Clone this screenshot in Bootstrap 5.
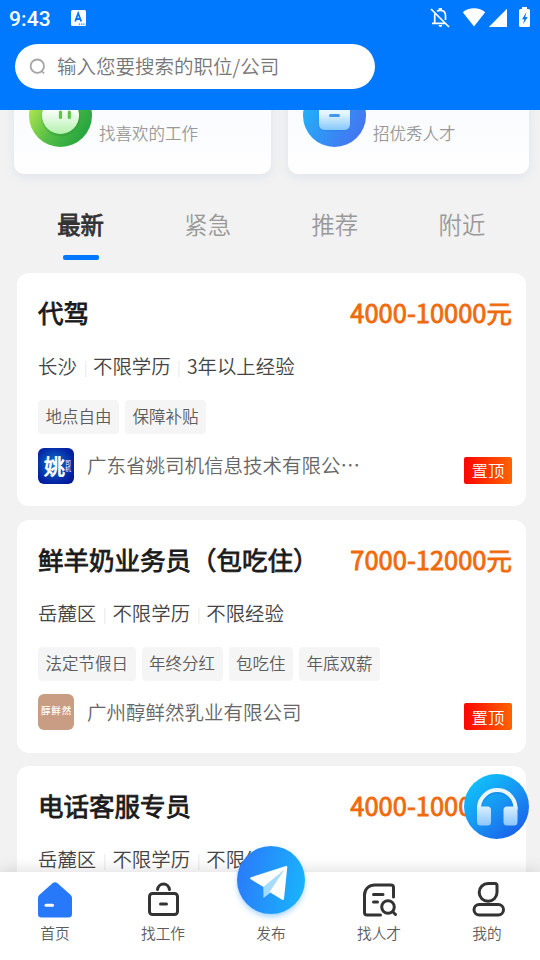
<!DOCTYPE html>
<html lang="zh-CN">
<head>
    <meta charset="UTF-8">
    <meta name="viewport" content="width=device-width, initial-scale=1">
    <title>招聘首页</title>
    <link href="https://cdn.jsdelivr.net/npm/bootstrap@5.3.0/dist/css/bootstrap.min.css" rel="stylesheet">
    <style>
        body { font-family: "Noto Sans CJK SC", sans-serif; font-weight: 350; background: #f2f2f2; height: 960px; line-height: 1; }
        svg { display: block; flex: none; }
        .heavy { font-weight: 400; -webkit-text-stroke: .8px currentColor; }

        .app-header { background: #0079ff; height: 110px; z-index: 2; }
        .status-bar { height: 36px; padding: 0 9px; }
        .clock { font-family: Roboto, sans-serif; font-size: 21px; font-weight: 500; letter-spacing: .1px; margin-right: 20px; padding-top: 2px; }
        .search-box { width: 360px; height: 45px; margin: 8px 0 0 15px; padding-left: 14px; color: #777; font-size: 19.5px; }
        .search-box span { padding-bottom: 1px; }

        .entry-row { margin: -53px 11px 0 14px; gap: 17px; }
        .entry { height: 117px; border-radius: 10px; padding-left: 15px; gap: 7px; color: #999; font-size: 16.5px;
                 background: linear-gradient(#f5f9ff, #fefefe); box-shadow: 0 3px 12px rgba(90, 130, 200, .12); }
        .entry span { padding-top: 36px; }
        .entry-job { width: 257px; }
        .entry-hire { width: 241px; }

        .tabs { height: 99px; padding: 39px 14.5px 0 17px; font-size: 23.4px; color: #999; }
        .tab-on { color: #333; }
        .tab-on::after { content: ""; display: block; width: 36px; height: 5px; margin: 19px auto 0; border-radius: 2px; background: #0079ff; }

        .jobs { margin: 0 14px 0 17px; gap: 13.7px; }
        .job { flex: none; height: 233px; border-radius: 12px; padding: 26px 14px 0 21px; }
        .job-title, .pay { font-size: 25.5px; line-height: 26px; }
        .job-title { color: #1a1a1a; }
        .pay { color: #f06a0c; }
        .meta { margin-top: 30px; height: 22px; font-size: 19.4px; line-height: 22px; color: #444; }
        .meta span + span { margin-left: 7.8px; padding-left: 8.5px; background: linear-gradient(#f0f0f0, #f0f0f0) 0 6px / 1.5px 16px no-repeat; }
        .tags { margin-top: 23px; gap: 6px; }
        .tag { height: 34px; padding: 0 7.5px; border-radius: 4px; background: #f5f5f5; color: #5c5c5c; font-size: 16.5px; line-height: 33px; }
        .firm { margin-top: 13.6px; height: 36px; color: #666; font-size: 19.5px; }
        .firm-name { padding-bottom: 1px; }
        .firm-logo { width: 36px; height: 36px; border-radius: 6px; margin-right: 13px; color: #fff; }
        .logo-yao { background: radial-gradient(circle at 45% 45%, #1478c8, #0426a6 65%, #02108c); font-size: 21px; padding-left: 3px; }
        .logo-yao i { font-style: normal; font-size: 6px; width: 6px; line-height: 6px; -webkit-text-stroke: 0; }
        .logo-milk { background: #c99d84; font-size: 9.5px; font-weight: 500; letter-spacing: .9px; padding: 0 0 4px 1px; }
        .pin-top { width: 48px; height: 27px; border-radius: 2px; font-size: 16.4px; color: #fff; background: linear-gradient(90deg, #ff0500, #ff6400); }

        .service { right: 11px; top: 774px; z-index: 1; }
        .bottom-nav { height: 88px; padding-left: 1px; z-index: 2; box-shadow: 0 0 16px rgba(0, 0, 0, .16); font-size: 14.7px; }
        .bottom-nav a { flex: none; width: 108px; color: #5c5c5c; padding-top: 8px; }
        .bottom-nav svg { margin-bottom: 6px; }
        .bottom-nav .publish { padding-top: 0; margin-top: -36px; }
        .bottom-nav .publish svg { margin-bottom: -1px; }
    </style>
</head>
<body class="d-flex flex-column overflow-hidden position-relative">

<!-- Header -->
<header class="app-header flex-shrink-0 position-relative">
    <div class="status-bar d-flex align-items-center text-white">
        <span class="clock">9:43</span>
        <!-- keyboard -->
        <svg width="16" height="36" viewBox="71 0 16 36">
            <rect x="71" y="10" width="15" height="16" rx="1.5" fill="#fff"/>
            <path d="M75.2 21.500l3-8.200 3 8.200M76.200 19h4" fill="none" stroke="#0079ff" stroke-width="1.8"/>
            <path d="M79 24.200h6" stroke="#0079ff" stroke-width="1.2" stroke-dasharray="1.2 1"/>
        </svg>
        <!-- muted bell, wifi, signal, battery -->
        <svg class="ms-auto" width="101" height="36" viewBox="430 0 101 36" fill="#fff">
            <g fill="none" stroke="#fff" stroke-width="1.7">
                <path d="M431 9l18 18"/>
                <path d="M432 23.300h13M434.700 23v-7.500q0-1.500.8-2.500M437 11.200q1.300-.9 3.300-.9c3.200 0 5.200 2.200 5.200 5.200v4.500"/>
            </g>
            <path d="M438.700 8h3.200v3h-3.200zM438.500 25h3.800q-.3 2-1.900 2t-1.900-2z"/>
            <path d="M474 26.600L462.800 12.200q4.500-3.900 11.200-3.900t11.200 3.900z"/>
            <path d="M507 8.800V27h-18.200z"/>
            <path d="M522 7h5v2h1.500q1.500 0 1.500 1.500v15q0 1.500-1.500 1.500h-8q-1.500 0-1.500-1.500v-15q0-1.500 1.500-1.500h1.500z"/>
            <path d="M526.500 12l-4.500 7.200h2.300l-1.300 5 4.700-7.200h-2.500z" fill="#0079ff"/>
        </svg>
    </div>
    <div class="search-box bg-white rounded-pill d-flex align-items-center">
        <svg width="28" height="20" viewBox="0 0 28 20" fill="none" stroke="#a5a5a5" stroke-width="1.8">
            <circle cx="8.3" cy="9.2" r="6.7"/><path d="M12.700 14l2.300 2.500"/>
        </svg>
        <span>输入您要搜索的职位/公司</span>
    </div>
</header>

<main class="flex-grow-1 overflow-hidden">
    <!-- Entry cards -->
    <div class="entry-row d-flex">
        <div class="entry entry-job d-flex align-items-center">
            <svg width="63" height="63" viewBox="0 0 63 63">
                <defs>
                    <linearGradient id="gJob" x1="0" y1=".2" x2="1" y2=".8"><stop offset="0" stop-color="#c3ee4f"/><stop offset=".5" stop-color="#55bd46"/><stop offset="1" stop-color="#1da13d"/></linearGradient>
                    <linearGradient id="gFace" x1="0" y1="0" x2="0" y2="1"><stop offset=".3" stop-color="#fff"/><stop offset="1" stop-color="#b4f2ae"/></linearGradient>
                </defs>
                <circle cx="31.5" cy="31.5" r="31.5" fill="url(#gJob)"/>
                <circle cx="32" cy="33" r="19.5" fill="#22882e" opacity=".25"/>
                <circle cx="31.5" cy="31.5" r="18.5" fill="url(#gFace)"/>
                <path d="M31.500 28v5.500M40.300 28v5.500" stroke="#62c24c" stroke-width="3.2" stroke-linecap="round"/>
            </svg>
            <span>找喜欢的工作</span>
        </div>
        <div class="entry entry-hire d-flex align-items-center">
            <svg width="63" height="63" viewBox="0 0 63 63">
                <defs>
                    <linearGradient id="gHire" x1="0" y1=".3" x2=".9" y2=".9"><stop offset="0" stop-color="#1fb4fa"/><stop offset="1" stop-color="#4672f0"/></linearGradient>
                    <linearGradient id="gBox" x1="0" y1="0" x2="0" y2="1"><stop offset=".4" stop-color="#e6f5ff"/><stop offset="1" stop-color="#84c8fa"/></linearGradient>
                </defs>
                <circle cx="31.5" cy="31.5" r="31.5" fill="url(#gHire)"/>
                <rect x="15.5" y="19" width="32" height="28.5" rx="6" fill="#1768d8" opacity=".2"/>
                <rect x="16" y="18" width="31" height="28" rx="5.5" fill="url(#gBox)"/>
                <path d="M27.500 31.500h8" stroke="#3f97ee" stroke-width="3" stroke-linecap="round"/>
            </svg>
            <span>招优秀人才</span>
        </div>
    </div>

    <!-- Tabs -->
    <div class="tabs d-flex text-center">
        <div class="col-3 tab-on heavy">最新</div>
        <div class="col-3">紧急</div>
        <div class="col-3">推荐</div>
        <div class="col-3">附近</div>
    </div>

    <!-- Job list -->
    <div class="jobs d-flex flex-column">
        <div class="job bg-white">
            <div class="d-flex justify-content-between heavy">
                <span class="job-title">代驾</span>
                <span class="pay">4000-10000元</span>
            </div>
            <div class="meta d-flex"><span>长沙</span><span>不限学历</span><span>3年以上经验</span></div>
            <div class="tags d-flex"><span class="tag">地点自由</span><span class="tag">保障补贴</span></div>
            <div class="firm d-flex align-items-center">
                <div class="firm-logo logo-yao heavy d-flex align-items-center justify-content-center">姚<i>司机</i></div>
                <span class="firm-name">广东省姚司机信息技术有限公⋯</span>
                <span class="pin-top ms-auto align-self-end d-flex align-items-center justify-content-center">置顶</span>
            </div>
        </div>
        <div class="job bg-white">
            <div class="d-flex justify-content-between heavy">
                <span class="job-title">鲜羊奶业务员（包吃住）</span>
                <span class="pay">7000-12000元</span>
            </div>
            <div class="meta d-flex"><span>岳麓区</span><span>不限学历</span><span>不限经验</span></div>
            <div class="tags d-flex"><span class="tag">法定节假日</span><span class="tag">年终分红</span><span class="tag">包吃住</span><span class="tag">年底双薪</span></div>
            <div class="firm d-flex align-items-center">
                <div class="firm-logo logo-milk d-flex align-items-center justify-content-center">醇鲜然</div>
                <span class="firm-name">广州醇鲜然乳业有限公司</span>
                <span class="pin-top ms-auto align-self-end d-flex align-items-center justify-content-center">置顶</span>
            </div>
        </div>
        <div class="job bg-white">
            <div class="d-flex justify-content-between heavy">
                <span class="job-title">电话客服专员</span>
                <span class="pay">4000-10000元</span>
            </div>
            <div class="meta d-flex"><span>岳麓区</span><span>不限学历</span><span>不限经验</span></div>
        </div>
    </div>
</main>

<!-- Customer service button -->
<svg class="service position-absolute" width="65" height="65" viewBox="0 0 65 65">
    <defs>
        <linearGradient id="gSrv" x1=".15" y1=".1" x2=".85" y2=".95"><stop offset="0" stop-color="#10c0fa"/><stop offset=".5" stop-color="#1794f2"/><stop offset="1" stop-color="#1a5eea"/></linearGradient>
        <linearGradient id="gEar" x1="0" y1="0" x2="0" y2="1"><stop offset="0" stop-color="#d8efff"/><stop offset="1" stop-color="#8cc6fb"/></linearGradient>
    </defs>
    <circle cx="32.5" cy="32.5" r="32.5" fill="url(#gSrv)"/>
    <path d="M15 36v-3a18.300 18.300 0 0 1 36.500 0v3" transform="translate(.5 1.5)" fill="none" stroke="#0d5fcb" stroke-opacity=".35" stroke-width="4"/>
    <path d="M15 36v-3a18.300 18.300 0 0 1 36.500 0v3" fill="none" stroke="#e9f6ff" stroke-width="4"/>
    <path d="M13 32.500h10.500q3.500 0 3.500 3.500v12q0 3.500-3.500 3.500h-7q-3.500 0-3.500-3.500zM53.500 32.500H43q-3.500 0-3.500 3.500v12q0 3.500 3.500 3.500h7q3.500 0 3.500-3.500z" fill="url(#gEar)"/>
</svg>

<!-- Bottom navigation -->
<nav class="bottom-nav bg-white d-flex flex-shrink-0 position-relative">
    <a class="d-flex flex-column align-items-center text-decoration-none" href="#">
        <svg width="40" height="40" viewBox="35 880 40 40">
            <path d="M52.500 883.200q2.500-1.800 5 0l13 11.500q1.500 1.400 1.500 3.300v16q0 3.500-3.500 3.500h-27q-3.500 0-3.500-3.500v-16q0-1.900 1.500-3.300z" fill="#2878fa"/>
            <path d="M46 905.200h6.500" stroke="#fff" stroke-width="3" stroke-linecap="round"/>
        </svg>
        <span>首页</span>
    </a>
    <a class="d-flex flex-column align-items-center text-decoration-none" href="#">
        <svg width="40" height="40" viewBox="143 880 40 40" fill="none" stroke="#333" stroke-width="3" stroke-linecap="round">
            <rect x="149.5" y="893.5" width="28" height="21" rx="3"/>
            <path d="M157.500 889.500c.5-3.200 3-5.500 6-5.500s5.500 2.300 6 5.500M160.500 904h6" />
        </svg>
        <span>找工作</span>
    </a>
    <a class="publish d-flex flex-column align-items-center text-decoration-none" href="#">
        <svg width="88" height="91" viewBox="227 836 88 91">
            <defs>
                <linearGradient id="gPub" x1="0" y1=".4" x2="1" y2=".6"><stop offset="0" stop-color="#2b7bfb"/><stop offset="1" stop-color="#19b3fd"/></linearGradient>
                <filter id="fPub" x="-20%" y="-20%" width="140%" height="140%"><feGaussianBlur stdDeviation="3"/></filter>
            </defs>
            <circle cx="271" cy="883" r="33" fill="#2a96ff" opacity=".5" filter="url(#fPub)"/>
            <circle cx="271" cy="880" r="34" fill="url(#gPub)"/>
            <path d="M263.300 887L287 866.500 270 893l-6.500 5z" fill="#a5dcfd"/>
            <path d="M286 866q1.500-.3 1.300 1.300L284 898.800q-.3 1.800-1.900.9L269.500 892 284.500 869.500 263.500 887l-12.700-7.800q-1.600-1.200.3-2z" fill="#fff"/>
        </svg>
        <span>发布</span>
    </a>
    <a class="d-flex flex-column align-items-center text-decoration-none" href="#">
        <svg width="40" height="40" viewBox="359 880 40 40" fill="none" stroke="#333" stroke-width="3" stroke-linecap="round">
            <path d="M393.500 897v-9.500q0-2.500-2.500-2.500h-16c-6 0-10.500 4-10.500 10v17.500q0 2.500 2.500 2.500h13.500M373.500 894.500h9.500M373.500 902h4"/>
            <circle cx="388" cy="907" r="6.3"/><path d="M392.800 911.800l2.700 2.700"/>
        </svg>
        <span>找人才</span>
    </a>
    <a class="d-flex flex-column align-items-center text-decoration-none" href="#">
        <svg width="40" height="40" viewBox="467 880 40 40" fill="none" stroke="#333" stroke-width="3">
            <path d="M488 883.500h7q2 0 2 2v7a8.900 8.900 0 1 1-9-9z"/>
            <rect x="474" y="904.5" width="29.5" height="10.5" rx="5.2"/>
        </svg>
        <span>我的</span>
    </a>
</nav>

<script src="https://cdn.jsdelivr.net/npm/bootstrap@5.3.0/dist/js/bootstrap.bundle.min.js"></script>
</body>
</html>
